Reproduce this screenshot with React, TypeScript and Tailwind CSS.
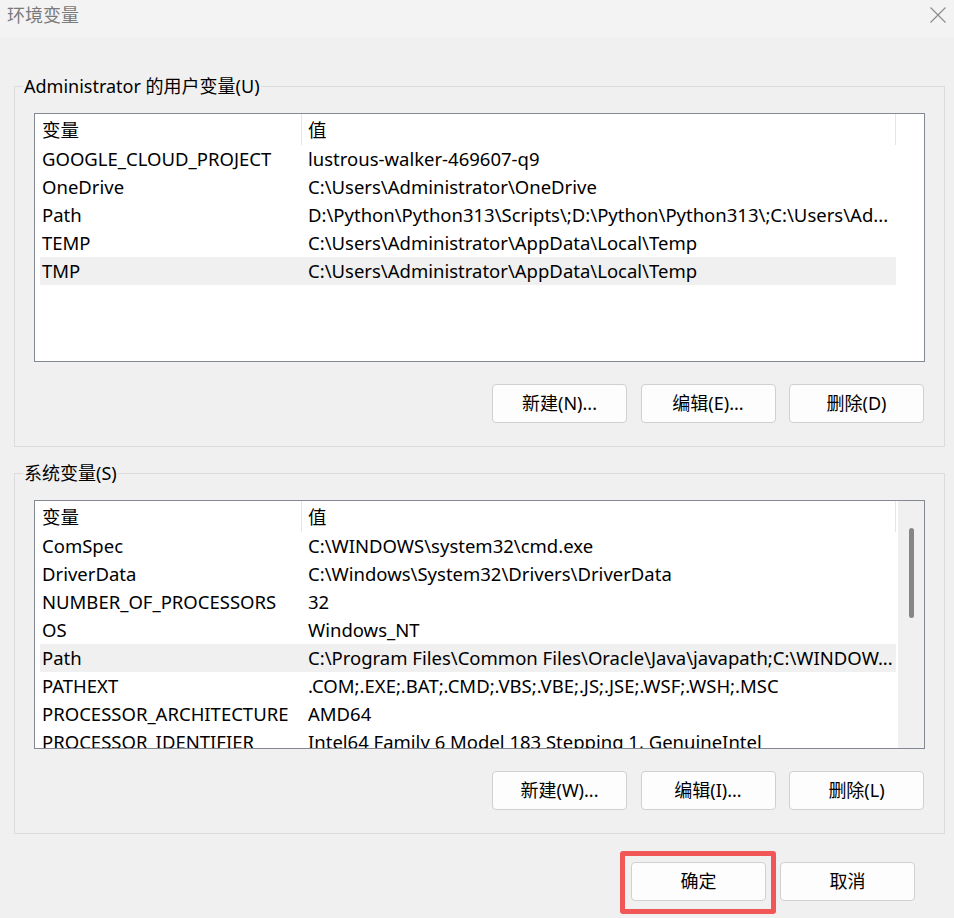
import React from "react";

const FONT = '"Noto Sans", "Noto Sans CJK SC", sans-serif';

type Row = [string, string];

const userRows: Row[] = [
  ["GOOGLE_CLOUD_PROJECT", "lustrous-walker-469607-q9"],
  ["OneDrive", "C:\\Users\\Administrator\\OneDrive"],
  ["Path", "D:\\Python\\Python313\\Scripts\\;D:\\Python\\Python313\\;C:\\Users\\Ad..."],
  ["TEMP", "C:\\Users\\Administrator\\AppData\\Local\\Temp"],
  ["TMP", "C:\\Users\\Administrator\\AppData\\Local\\Temp"],
];

const sysRows: Row[] = [
  ["ComSpec", "C:\\WINDOWS\\system32\\cmd.exe"],
  ["DriverData", "C:\\Windows\\System32\\Drivers\\DriverData"],
  ["NUMBER_OF_PROCESSORS", "32"],
  ["OS", "Windows_NT"],
  ["Path", "C:\\Program Files\\Common Files\\Oracle\\Java\\javapath;C:\\WINDOW..."],
  ["PATHEXT", ".COM;.EXE;.BAT;.CMD;.VBS;.VBE;.JS;.JSE;.WSF;.WSH;.MSC"],
  ["PROCESSOR_ARCHITECTURE", "AMD64"],
  ["PROCESSOR_IDENTIFIER", "Intel64 Family 6 Model 183 Stepping 1, GenuineIntel"],
];

function WinButton({ label, className = "" }: { label: string; className?: string }) {
  return (
    <div
      className={
        "flex h-[39px] w-[135px] shrink-0 items-center justify-center rounded-[4px] border border-[#d0d0d0] bg-[#fdfdfd] text-[18px] text-black " +
        className
      }
    >
      {label}
    </div>
  );
}

function VarList({ rows, selected, scroll }: { rows: Row[]; selected: number; scroll?: boolean }) {
  return (
    <div className="flex h-[249px] w-[891px] overflow-hidden border border-[#848991] bg-white text-[18.5px]">
      <div className="flex min-w-0 flex-1 flex-col pl-[5px]">
        <div className="flex h-[31px] w-[856px] shrink-0 items-center">
          <div className="flex h-full w-[262px] items-center border-r border-[#e5e5e5] pl-[2px]">变量</div>
          <div className="flex h-full flex-1 items-center border-r border-[#e5e5e5] pl-[6px]">值</div>
        </div>
        {rows.map((r, i) => (
          <div
            key={i}
            className={
              "flex h-[28px] w-[856px] shrink-0 items-center whitespace-nowrap " +
              (i === selected ? "bg-[#f0f0f0]" : "")
            }
          >
            <div className="w-[262px] overflow-hidden pl-[2px]">{r[0]}</div>
            <div className="flex-1 overflow-hidden pl-[6px]">{r[1]}</div>
          </div>
        ))}
      </div>
      {scroll ? (
        <div className="flex w-[26px] shrink-0 justify-center bg-[#f0f0f0] pt-[27px]">
          <div className="ml-[1px] h-[90px] w-[5px] rounded-full bg-[#868686]" />
        </div>
      ) : (
        <div className="w-[26px] shrink-0" />
      )}
    </div>
  );
}

function Group({
  title,
  rows,
  selected,
  scroll,
  buttons,
}: {
  title: string;
  rows: Row[];
  selected: number;
  scroll?: boolean;
  buttons: string[];
}) {
  return (
    <fieldset className="ml-[14px] w-[931px] border border-[#dcdcdc]">
      <legend className="ml-[8px] px-[1px] text-[18px] leading-[24px]">{title}</legend>
      <div className="flex flex-col px-[19px] pt-[15px] pb-[23px]">
        <VarList rows={rows} selected={selected} scroll={scroll} />
        <div className="mt-[22px] flex justify-end gap-[13.5px] pr-[1px]">
          {buttons.map((b) => (
            <WinButton key={b} label={b} />
          ))}
        </div>
      </div>
    </fieldset>
  );
}

export default function App() {
  return (
    <div
      className="flex h-[918px] w-[954px] flex-col overflow-hidden bg-[#f0f0f0] text-[18px] text-black"
      style={{ fontFamily: FONT }}
    >
      <div className="flex h-[38px] shrink-0 items-start justify-between bg-[#f3f3f3] pl-[7px] pr-[8px] pt-[3px]">
        <span className="text-[18px] leading-[24px] text-[#7a7a7a]">环境变量</span>
        <svg width="16" height="16" viewBox="0 0 16 16" className="mt-[4px]">
          <path d="M0.5 0.5 L15.5 15.5 M15.5 0.5 L0.5 15.5" stroke="#8a8a8a" strokeWidth="1.1" fill="none" />
        </svg>
      </div>
      <div className="mt-[36px]">
        <Group
          title="Administrator 的用户变量(U)"
          rows={userRows}
          selected={4}
          buttons={["新建(N)...", "编辑(E)...", "删除(D)"]}
        />
      </div>
      <div className="mt-[14px]">
        <Group
          title="系统变量(S)"
          rows={sysRows}
          selected={4}
          scroll
          buttons={["新建(W)...", "编辑(I)...", "删除(L)"]}
        />
      </div>
      <div className="mt-[17px] flex items-start justify-end pr-[39px]">
        <div className="rounded-[3px] border-[5px] border-[#f25757] pt-[6px] pb-[8px] pl-[6px] pr-[5px]">
          <WinButton label="确定" className="h-[38px] w-[134px]" />
        </div>
        <WinButton label="取消" className="ml-[4px] mt-[11px] h-[38px]" />
      </div>
    </div>
  );
}
